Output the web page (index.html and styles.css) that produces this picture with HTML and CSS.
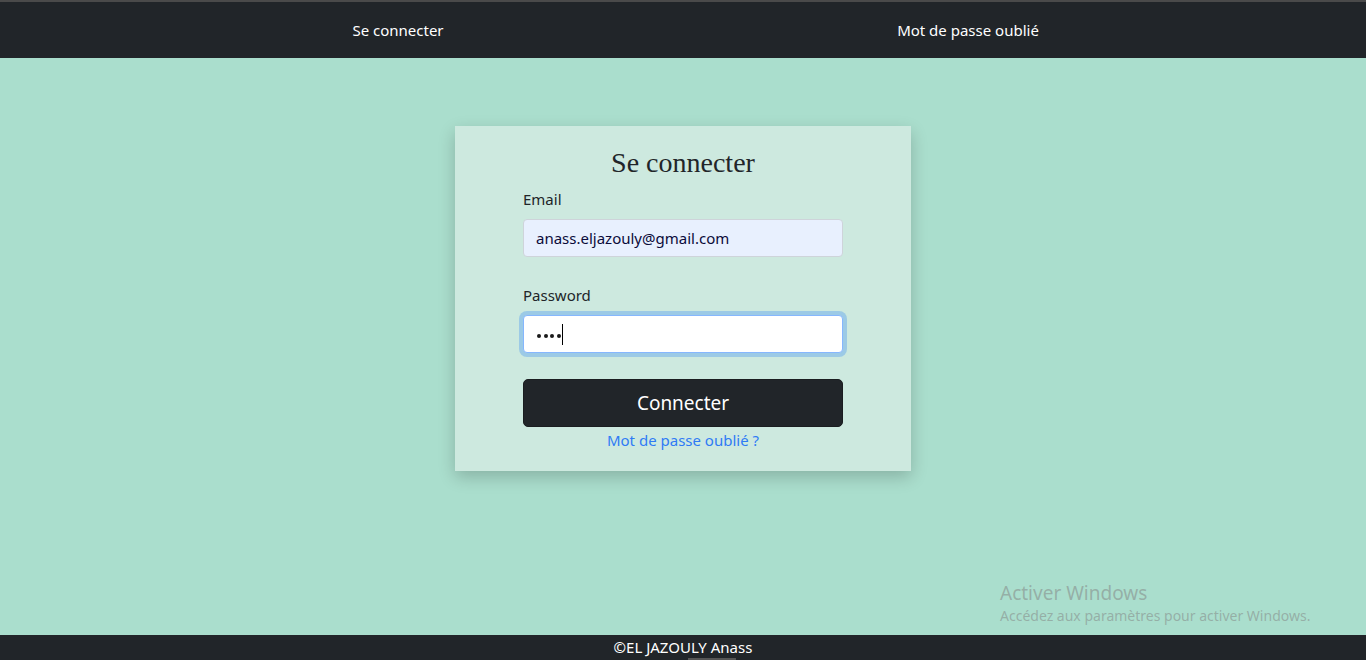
FILE: index.html
```html
<!DOCTYPE html>
<html lang="fr">
<head>
<meta charset="utf-8">
<title>Se connecter</title>
<link rel="stylesheet" href="styles.css">
</head>
<body>
<nav class="topbar">
  <div class="nav-inner">
    <a class="nav-link" href="#">Se connecter</a>
    <a class="nav-link" href="#">Mot de passe oublié</a>
  </div>
</nav>
<main class="main">
  <form class="card">
    <h2 class="card-title">Se connecter</h2>
    <div class="field">
      <label class="field-label">Email</label>
      <div class="input input-autofill">anass.eljazouly@gmail.com</div>
    </div>
    <div class="field">
      <label class="field-label">Password</label>
      <div class="input input-focus"><span class="dots"><i class="dot"></i><i class="dot"></i><i class="dot"></i><i class="dot"></i></span><span class="caret"></span></div>
    </div>
    <button class="btn-submit" type="button">Connecter</button>
    <a class="forgot" href="#">Mot de passe oublié ?</a>
  </form>
</main>
<footer class="footer">©EL JAZOULY Anass</footer>
<div class="watermark">
  <div class="wm-title">Activer Windows</div>
  <div class="wm-sub">Accédez aux paramètres pour activer Windows.</div>
</div>
<div class="scroll-thumb"></div>
</body>
</html>
```
FILE: styles.css
```css
* { box-sizing: border-box; }
html, body { height: 100%; }
body {
  margin: 0;
  background: #aadecd;
  font-family: "Noto Sans", "Open Sans", sans-serif;
  font-size: 15px;
  line-height: 24px;
  color: #212529;
  display: flex;
  flex-direction: column;
  overflow: hidden;
}
.topbar {
  border-top: 2px solid #4a4a4a;
  background: #212529;
  height: 58px;
  flex: none;
}
.nav-inner {
  width: 1140px;
  margin: 0 auto;
  height: 56px;
  display: grid;
  grid-template-columns: 1fr 1fr;
  align-items: center;
  justify-items: center;
}
.nav-link {
  color: #fff;
  text-decoration: none;
  font-size: 15px;
}
.main {
  flex: 1;
}
.card {
  width: 456px;
  margin: 68px auto 0;
  background: #cde9df;
  padding: 20px 68px 19px;
  box-shadow: 0 6px 16px rgba(0,0,0,0.2);
  display: flex;
  flex-direction: column;
}
.card-title {
  font-family: "Liberation Serif", "Times New Roman", serif;
  font-weight: normal;
  font-size: 28px;
  line-height: 34px;
  text-align: center;
  margin: 0 0 7px;
}
.field { margin-bottom: 26px; display: flex; flex-direction: column; }
.field-label { margin-bottom: 8px; }
.input {
  height: 38px;
  border: 1px solid #ced4da;
  border-radius: 4px;
  padding: 6px 12px 6px 13px;
  background: #fff;
  display: flex;
  align-items: center;
}
.input-autofill { background: #e8f0fe; color: #0b0b3a; padding-left: 12px; }
.input-focus {
  border-color: #86b7fe;
  box-shadow: 0 0 0 4px rgba(13,110,253,0.25);
}
.dots { display: flex; gap: 2.5px; margin-top: 4px; }
.dot { display: block; width: 4px; height: 4px; border-radius: 50%; background: #1a1a1a; }
.caret { width: 1px; height: 21px; background: #000; margin-left: 1.5px; }
.btn-submit {
  height: 48px;
  background: #212529;
  color: #fff;
  border: 1px solid #1a1d20;
  border-radius: 5px;
  font-family: inherit;
  font-size: 19px;
  cursor: pointer;
}
.forgot {
  margin-top: 1px;
  text-align: center;
  color: #2f7bf5;
  text-decoration: none;
}
.footer {
  flex: none;
  height: 25px;
  background: #212529;
  color: #fff;
  text-align: center;
  line-height: 25px;
  font-size: 15px;
}
.watermark {
  position: absolute;
  left: 1000px;
  top: 580px;
  color: rgba(128,128,128,0.5);
}
.wm-title { font-size: 19px; line-height: 26px; }
.wm-sub { font-size: 14px; line-height: 20px; }
.scroll-thumb {
  position: absolute;
  left: 688px;
  top: 658px;
  width: 48px;
  height: 2px;
  background: #555;
}
```
